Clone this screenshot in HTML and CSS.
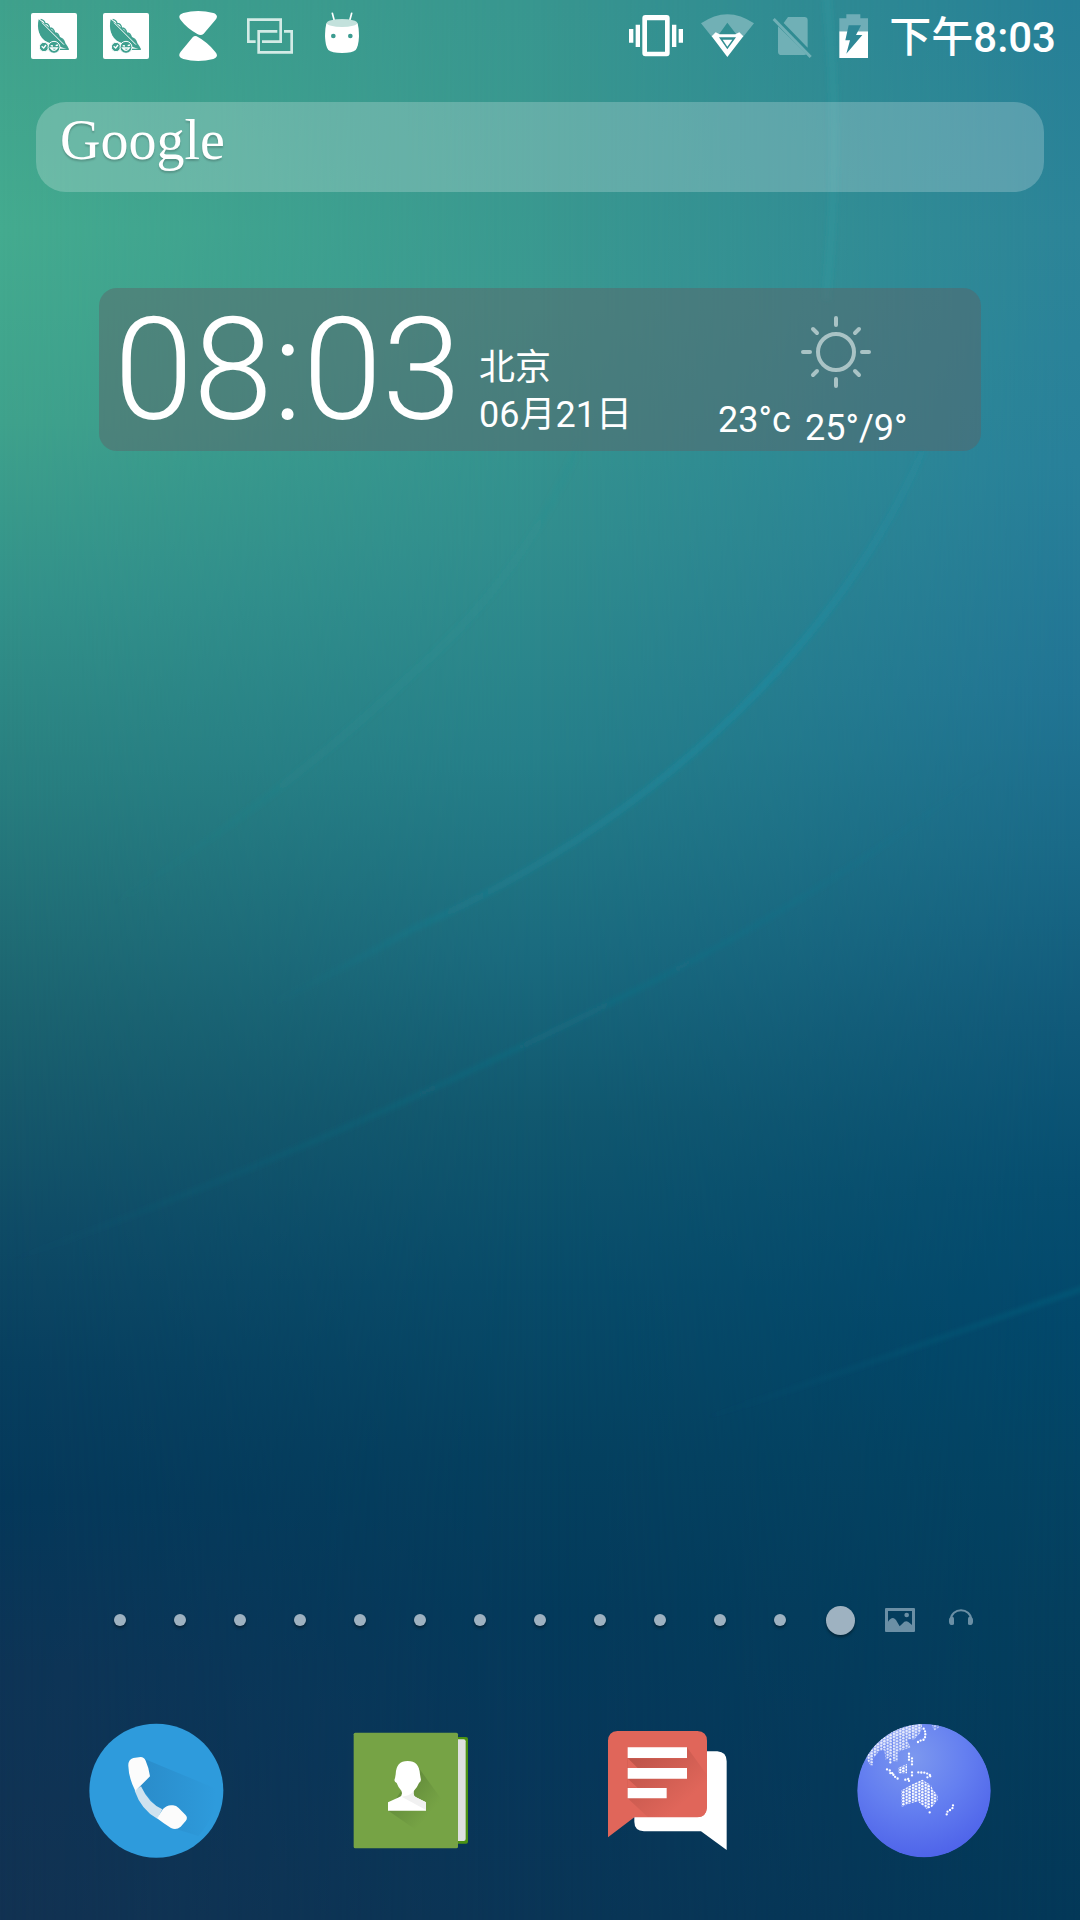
FILE: index.html
```html
<!DOCTYPE html>
<html lang="zh-CN">
<head>
<meta charset="utf-8">
<meta name="viewport" content="width=device-width, initial-scale=1">
<title>主屏幕</title>
<link rel="stylesheet" href="styles.css">
</head>
<body>
<div class="wallpaper" aria-hidden="true">
  <div class="shade shade-mid"></div>
  <div class="shade shade-right"></div>
  <svg class="streaks" viewBox="0 0 1080 1920" preserveAspectRatio="none">
    <defs>
      <linearGradient id="fade" gradientUnits="userSpaceOnUse" x1="260" y1="1000" x2="940" y2="400">
        <stop offset="0" stop-color="#1c93a6" stop-opacity="0"/>
        <stop offset=".65" stop-color="#1c8fa6" stop-opacity=".5"/>
        <stop offset="1" stop-color="#1c93a6" stop-opacity=".15"/>
      </linearGradient>
      <linearGradient id="fade2" gradientUnits="userSpaceOnUse" x1="0" y1="1264" x2="1000" y2="760">
        <stop offset="0" stop-color="#1b8494" stop-opacity="0"/>
        <stop offset=".55" stop-color="#187c90" stop-opacity=".26"/>
        <stop offset="1" stop-color="#1b8494" stop-opacity="0"/>
      </linearGradient>
      <linearGradient id="fade3" gradientUnits="userSpaceOnUse" x1="700" y1="1420" x2="1080" y2="1289">
        <stop offset="0" stop-color="#10708a" stop-opacity="0"/>
        <stop offset="1" stop-color="#10708a" stop-opacity=".35"/>
      </linearGradient>
      <linearGradient id="fade4" gradientUnits="userSpaceOnUse" x1="100" y1="910" x2="580" y2="440">
        <stop offset="0" stop-color="#2c9499" stop-opacity="0"/>
        <stop offset=".6" stop-color="#2c9499" stop-opacity=".16"/>
        <stop offset="1" stop-color="#2c9499" stop-opacity=".05"/>
      </linearGradient>
      <filter id="soft"><feGaussianBlur stdDeviation="2"/></filter>
    </defs>
    <g fill="none" filter="url(#soft)">
      <path d="M826 -10C838 100 836 200 826 300" stroke="#2a9ea0" stroke-opacity=".28" stroke-width="9"/>
      <path d="M923 450C860 600 700 800 413 929Q340 970 260 1010" stroke="url(#fade)" stroke-width="7"/>
      <path d="M1000 760Q820 900 620 998Q310 1155 0 1264" stroke="url(#fade2)" stroke-width="6"/>
      <path d="M1090 1286C950 1335 850 1370 700 1420" stroke="url(#fade3)" stroke-width="5"/>
      <path d="M580 440Q530 570 413 673Q280 800 100 912" stroke="url(#fade4)" stroke-width="8"/>
    </g>
  </svg>
</div>

<main class="screen">
  <header class="status">
    <svg class="cell" viewBox="54 0 216 216">
      <g id="pea">
        <rect x="93" y="39" width="138" height="138" rx="6" fill="#fff"/>
        <path d="M116 58C110 84 116 114 142 126L166 136L207 149C200 124 150 84 116 58Z" fill="#3fa08f"/>
        <path d="M122 58q12 3 13 12q12 0 14 14q13 0 15 15q12 0 14 14q12 2 16 16" fill="none" stroke="#3fa08f" stroke-width="4"/>
        <path d="M126 68L192 134" stroke="#fff" stroke-width="3"/>
        <circle cx="132" cy="141" r="14" fill="#3fa08f" stroke="#fff" stroke-width="3"/>
        <circle cx="162" cy="142" r="18" fill="#3fa08f" stroke="#fff" stroke-width="3"/>
        <path d="M125 139l6 5l7-9M152 137l7 1M167 137l7-2M152 144q11 14 20 0z" fill="none" stroke="#fff" stroke-width="4"/>
        <path d="M180 148H206" stroke="#3fa08f" stroke-width="4"/>
      </g>
    </svg>
    <svg class="cell" viewBox="54 0 216 216"><use href="#pea"/></svg>
    <svg class="cell" viewBox="486 0 216 216" fill="#fff">
      <path d="M538 48Q540 42 550 39Q594 27 640 39Q650 42 651 50Q650 56 646 60L611 101Q603 109 592 102Q560 84 542 60Q537 54 538 48Z"/>
      <path d="M538 168Q540 174 550 177Q594 189 640 177Q650 174 651 166Q650 160 646 156Q622 126 590 109Q584 106 578 112L542 155Q537 161 538 168Z"/>
    </svg>
    <svg class="cell" viewBox="702 0 216 216" fill="none" stroke="#d3ebe6" stroke-width="8">
      <path d="M767 125H745V59H842V125H786M832 94H776V157H875V94H852"/>
    </svg>
    <svg class="cell" viewBox="918 0 216 216">
      <path d="M997 40L1004 66M1055 40L1048 66" stroke="#fff" stroke-width="5" stroke-linecap="round"/>
      <path d="M979 70Q975 86 975 108Q976 138 985 150Q995 159 1026 159Q1058 159 1067 150Q1076 138 1077 108Q1077 86 1073 70Z" fill="#fff"/>
      <ellipse cx="1026" cy="69" rx="46" ry="12" fill="#c3e1dc"/>
      <circle cx="1000" cy="108" r="7" fill="#3c9c91"/><circle cx="1051" cy="108" r="7" fill="#3c9c91"/>
    </svg>

    <svg class="cell push" viewBox="30 0 216 216" fill="#fff">
      <path d="M106 45H170Q179 45 179 54V160Q179 169 170 169H106Q97 169 97 160V54Q97 45 106 45ZM111 61V155H165V61Z" fill-rule="evenodd"/>
      <path d="M57 87H70V128H57ZM77 74H90V141H77ZM186 74H199V141H186ZM206 87H219V128H206Z"/>
    </svg>
    <svg class="cell" viewBox="246 0 216 216">
      <path d="M273 70Q352 15 432 70L399 111Q392 98 380 104L352 68L326 104Q313 96 306 111Z" fill="#71b0b5"/>
      <path d="M352 171L305 109L317 97L329 103H376L388 97L400 109ZM327 112L352 148L378 112Z" fill="#fff" fill-rule="evenodd"/>
      <path d="M338 119H367L352 140Z" fill="#fff"/>
    </svg>
    <svg class="cell narrow" viewBox="462 0 180 216">
      <path d="M504 79L590 163Q587 165 582 165H515Q504 165 504 155ZM534 51H583Q593 51 593 61V143L521 69Z" fill="#70b0b6"/>
      <path d="M491 57L602 171" stroke="#70b0b6" stroke-width="9"/>
    </svg>
    <svg class="cell narrow" viewBox="642 0 180 216">
      <path d="M688 94V55H709V43H751V55H774V94Z" fill="#6fadb7"/>
      <path d="M688 94H774V174H688Z" fill="#fff"/>
      <path d="M716 76H753L738 105H757L709 161L720 121H706Z" fill="#2e8796"/>
    </svg>
    <time class="clock" datetime="20:03">下午8:03</time>
  </header>

  <form class="search" role="search">
    <label class="logo" for="q">Google</label>
    <input class="query" id="q" type="search">
  </form>

  <section class="widget">
    <time class="big-time" datetime="08:03">08:03</time>
    <div class="place">
      <div>北京</div>
      <div>06月21日</div>
    </div>
    <div class="now">23°c</div>
    <div class="forecast">
      <svg class="sun" viewBox="0 0 72 72" fill="none" stroke="#a9c3c5" stroke-width="4" stroke-linecap="round">
        <circle cx="36" cy="36" r="18"/>
        <path d="M36 2V9M36 63V70M3 36H10M62 36H69M13 13L17 17M55 55L59 59M13 59L17 55M55 17L59 13"/>
      </svg>
      <div class="range">25°/9°</div>
    </div>
  </section>

  <nav class="pages" aria-label="页面">
    <button class="page" aria-label="1"><span class="dot"></span></button>
    <button class="page" aria-label="2"><span class="dot"></span></button>
    <button class="page" aria-label="3"><span class="dot"></span></button>
    <button class="page" aria-label="4"><span class="dot"></span></button>
    <button class="page" aria-label="5"><span class="dot"></span></button>
    <button class="page" aria-label="6"><span class="dot"></span></button>
    <button class="page" aria-label="7"><span class="dot"></span></button>
    <button class="page" aria-label="8"><span class="dot"></span></button>
    <button class="page" aria-label="9"><span class="dot"></span></button>
    <button class="page" aria-label="10"><span class="dot"></span></button>
    <button class="page" aria-label="11"><span class="dot"></span></button>
    <button class="page" aria-label="12"><span class="dot"></span></button>
    <button class="page" aria-label="13"><span class="dot current"></span></button>
    <button class="page" aria-label="图片">
      <svg class="mini" viewBox="0 0 90 90">
        <path d="M3 9H87Q90 9 90 12V78Q90 81 87 81H3Q0 81 0 78V12Q0 9 3 9ZM9 18V50Q24 28 36 50L44 64L52 56Q63 43 74 54L81 60V18Z" fill="#6b8fa5" fill-rule="evenodd"/>
        <circle cx="65" cy="30" r="7" fill="#6b8fa5"/>
      </svg>
    </button>
    <button class="page" aria-label="音乐">
      <svg class="mini" viewBox="0 0 90 90">
        <path d="M17 46C18 6 78 6 79 46" fill="none" stroke="#6b8fa5" stroke-width="6"/>
        <path d="M12 44Q13 35 22 35Q28 36 27 46V58Q24 61 16 59Q11 56 12 44ZM84 44Q83 35 74 35Q68 36 69 46V58Q72 61 80 59Q85 56 84 44Z" fill="#6b8fa5"/>
      </svg>
    </button>
  </nav>

  <nav class="dock" aria-label="应用">
    <button class="app" aria-label="电话">
      <svg class="icon" viewBox="12 27 432 432">
        <defs><linearGradient id="pshade"><stop offset="0" stop-color="#2a8cca"/><stop offset="1" stop-color="#2e9bdc"/></linearGradient></defs>
        <circle cx="229" cy="242" r="201" fill="#2e9bdc"/>
        <path d="M192 146L410 237Q410 320 355 378L285 356L180 230Z" fill="url(#pshade)"/>
        <path d="M164 242L183 229Q206 280 247 298L232 326Q184 300 164 242Z" fill="#cfe2ef"/>
        <path d="M145 168Q144 149 160 144L182 141Q192 141 197 152Q207 174 210 199L166 243Q146 204 145 168Z" fill="#fcfcfc"/>
        <path d="M231 325L249 297Q262 283 279 286Q289 287 296 294L316 314Q325 323 317 333L302 350Q289 361 273 354Q250 340 231 325Z" fill="#fcfcfc"/>
      </svg>
    </button>
    <button class="app" aria-label="通讯录">
      <svg class="icon" viewBox="0 27 432 432">
        <defs><linearGradient id="cshade" x1="0" y1="0" x2="1" y2="1"><stop offset=".2" stop-color="#5f8738"/><stop offset=".75" stop-color="#76a345"/></linearGradient></defs>
        <rect x="330" y="81" width="54" height="320" rx="6" fill="#4b9213"/>
        <rect x="330" y="88" width="47" height="305" rx="6" fill="#e0e0e0"/>
        <rect x="41" y="68" width="313" height="347" rx="5" fill="#76a345"/>
        <path d="M232 168L310 275L225 358L145 302Z" fill="url(#cshade)"/>
        <path d="M144 302V277L177 262Q190 257 184 242Q173 229 170 219Q160 214 165 205L167 193Q168 153 203 153Q238 153 240 193L242 205Q245 214 237 219Q232 232 222 242Q217 257 228 262L258 277V302Z" fill="#fff"/>
        <path d="M185 260Q210 258 221 244Q219 257 228 262L258 277V300Z" fill="#f1f1f1"/>
      </svg>
    </button>
    <button class="app" aria-label="信息">
      <svg class="icon" viewBox="18 27 432 432">
        <defs><linearGradient id="mshade" x1="0" y1="0" x2="1" y2="1"><stop offset=".1" stop-color="#bd5449"/><stop offset=".75" stop-color="#e0665a"/></linearGradient></defs>
        <path d="M330 124H382Q410 126 410 154V420L333 364H162Q133 362 133 335V300H330Z" fill="#fff"/>
        <path d="M82 63H322Q351 65 351 92V292Q349 322 322 322H133L54 382V92Q55 65 82 63Z" fill="#e0665a"/>
        <path d="M291 112L351 195V292Q349 321 322 321H173L113 265V145H291Z" fill="url(#mshade)"/>
        <path d="M113 144L143 174H113ZM113 206L143 233H113Z" fill="#e0665a"/>
        <path d="M113 112H291V144H113ZM113 174H291V206H113ZM113 234H230V265H113Z" fill="#fff"/>
      </svg>
    </button>
    <button class="app" aria-label="浏览器">
      <svg class="icon" viewBox="21 27 432 432">
        <defs>
          <radialGradient id="sea" cx=".42" cy=".25" r=".78"><stop offset="0" stop-color="#7c98ef"/><stop offset=".5" stop-color="#647ff0"/><stop offset="1" stop-color="#4d62e9"/></radialGradient>
          <pattern id="land" width="19" height="9" patternUnits="userSpaceOnUse">
            <g fill="#fff"><circle cx="4" cy="4" r="3.8"/><circle cx="14" cy="-.5" r="3.8"/><circle cx="14" cy="8.5" r="3.8"/></g>
          </pattern>
          <clipPath id="globe"><circle cx="237" cy="242" r="200"/></clipPath>
        </defs>
        <g clip-path="url(#globe)">
          <circle cx="237" cy="242" r="201" fill="url(#sea)"/>
          <path d="M60 140L85 100L130 60L190 40H232L228 66L208 88H186L196 112L158 126V154H146L138 138L122 150L118 120L102 124L84 146V166H76Z" fill="url(#land)" opacity=".8"/>
          <path d="M60 140L85 100L130 60L190 40H232L228 60L150 80L100 115L76 146Z" fill="#fff" opacity=".22"/>
          <path d="M260 45H282V52L268 62Z" fill="url(#land)" opacity=".6"/>
          <path d="M168 242L204 222L232 209L258 226L264 240L278 256V270L262 290L246 298L232 286L218 274L190 282L170 291Z" fill="url(#land)"/>
          <path d="M159 174L186 162V190H160Z" fill="url(#land)"/>
          <path d="M236 56L241 66V80L236 89L226 92L217 97M192 131V152M201 145V166M136 148V166M126 178L136 182V192L144 188L146 198L154 203L163 209M181 209L192 206V216M201 187V200M220 187L239 188L250 192L259 198L247 202M254 307H255M324 286L323 294L315 300L306 306L305 314" fill="none" stroke="#fff" stroke-width="7" stroke-linecap="round" stroke-dasharray="0 9"/>
        </g>
      </svg>
    </button>
  </nav>
</main>
</body>
</html>
```

FILE: styles.css
```css
* { box-sizing: border-box; }

body {
  margin: 0;
  color: #fff;
  font-family: Roboto, "Noto Sans CJK SC", sans-serif;
  font-size: 36px;
  background: #0a3556;
}

button {
  border: 0;
  padding: 0;
  background: none;
  display: flex;
  align-items: center;
  justify-content: center;
}

.wallpaper {
  position: absolute;
  inset: 0;
  z-index: -1;
  min-height: 100vh;
  background: linear-gradient(#3fa18c 0%, #44ab8f 12%, #3fa28c 22%, #33928a 31%, #287e7f 41%, #1b626f 53%, #0f4b66 64%, #083f5f 71%, #05385a 78%, #0e3456 87%, #123252 100%);
}

.shade, .streaks {
  position: absolute;
  inset: 0;
  width: 100%;
  height: 100%;
}

.shade-mid {
  background: linear-gradient(#38968f 0%, #3a9990 16%, #318e8e 28%, #26808a 39%, #1a6a7e 50%, #11586f 58%, #084b69 67%, #05405f 76%, #043a5b 84%, #07375a 92%, #0a3556 100%);
  mask-image: linear-gradient(to right, transparent, #000 50%);
}

.shade-right {
  background: linear-gradient(#267f97 0%, #2c8498 12%, #28809a 24%, #217494 36%, #1a6a88 44%, #115a7a 53%, #064e70 62%, #02486b 69%, #034464 76%, #043f5e 84%, #033858 100%);
  mask-image: linear-gradient(to right, transparent 50%, #000);
}

.screen {
  min-height: 100vh;
  display: flex;
  flex-direction: column;
  padding-bottom: 57px;
}

.status {
  display: flex;
  align-items: center;
  height: 72px;
  padding: 0 24px 0 18px;
}

.cell { width: 72px; height: 72px; }
.cell.narrow { width: 60px; }
.cell.push { margin-left: auto; }

.clock {
  margin-left: 5px;
  padding-top: 4px;
  font-size: 42px;
  font-weight: 500;
  line-height: 68px;
}

.search {
  display: flex;
  height: 90px;
  margin: 30px 36px 0;
  padding: 0 24px;
  border-radius: 30px;
  background: rgba(255, 255, 255, .22);
}

.logo {
  font-family: "Liberation Serif", serif;
  font-size: 56px;
  line-height: 76px;
  text-shadow: 0 2px 2px rgba(0, 0, 0, .2);
}

.query {
  flex: 1;
  min-width: 0;
  border: 0;
  outline: 0;
  background: none;
  color: inherit;
  font: inherit;
}

.widget {
  display: grid;
  grid-template-columns: 380px 1fr 82px 181px;
  align-items: end;
  height: 163px;
  margin: 96px 99px 0;
  border-radius: 18px;
  background: rgba(94, 97, 102, .46);
  line-height: 47px;
}

.big-time {
  padding-left: 15px;
  font-size: 143px;
  font-weight: 300;
  line-height: 164px;
}

.place { padding-bottom: 13px; }
.now { padding-bottom: 8px; }
.forecast { display: flex; flex-direction: column; gap: 17px; }
.sun { width: 72px; height: 72px; }
.range { padding-left: 5px; }

.pages {
  display: grid;
  grid-template-columns: repeat(15, 1fr);
  height: 60px;
  margin: auto 90px 69px;
}

.dot {
  width: 12px;
  height: 12px;
  border-radius: 50%;
  background: #9eb2c1;
  box-shadow: 0 2px 3px rgba(0, 0, 0, .4);
}

.dot.current { width: 29px; height: 29px; }
.mini { width: 30px; height: 30px; }

.dock {
  display: grid;
  grid-template-columns: repeat(4, 1fr);
  padding: 0 28px;
}

.icon { width: 144px; height: 144px; }
```
